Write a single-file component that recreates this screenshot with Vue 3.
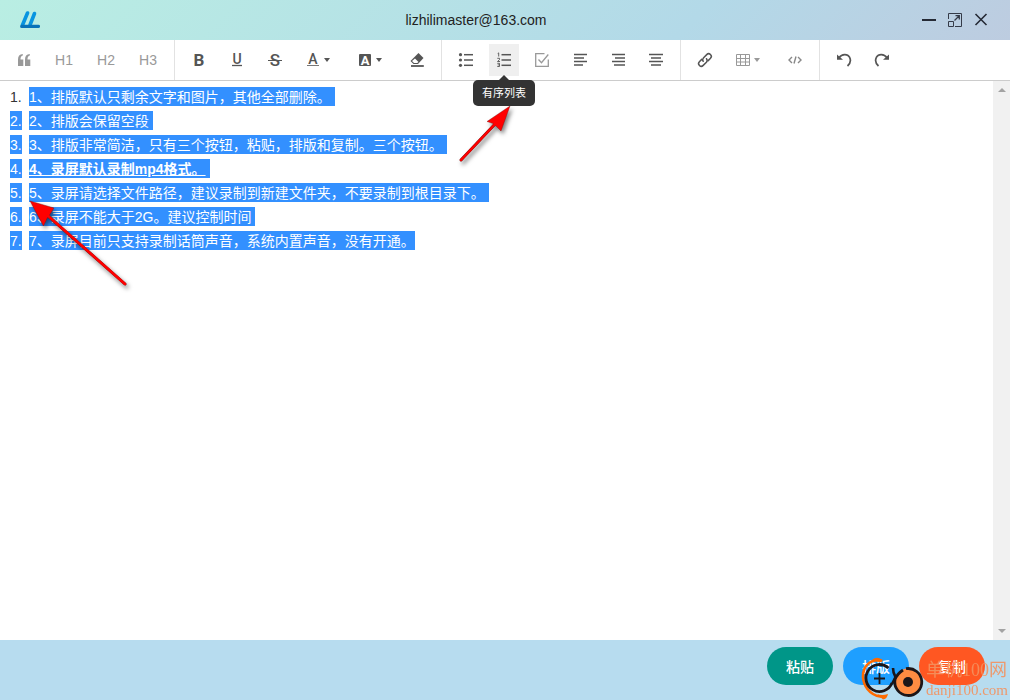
<script setup>
const txt = (x, y, size, weight, ch, fill = '#555') =>
  `<text x="${x}" y="${y}" text-anchor="middle" font-family="Roboto, sans-serif" font-size="${size}" font-weight="${weight}" fill="${fill}">${ch}</text>`

const rows = (list) =>
  list.map(([x1, y, x2]) => `<path d="M${x1} ${y}H${x2}" stroke="#555" stroke-width="1.500"/>`).join('')

const groups = [
  [
    {
      label: '引用',
      icon: '<path fill="#999" d="M7.800 3v1.500C6 5 5.500 6.500 5.500 8.500H8.300V15H3V8.500C3 5 4.500 3.200 7.800 3zM14.800 3v1.500C13 5 12.500 6.500 12.500 8.500H15.300V15H10V8.500C10 5 11.500 3.200 14.800 3z"/>',
    },
    { label: '标题1', text: 'H1' },
    { label: '标题2', text: 'H2' },
    { label: '标题3', text: 'H3' },
  ],
  [
    { label: '加粗', icon: txt(9, 15, 17, 700, 'B') },
    { label: '下划线', icon: txt(9, 12.5, 14, 500, 'U') + '<path d="M4 14.500H14" stroke="#555" stroke-width="1.300"/>' },
    { label: '删除线', icon: txt(9, 15, 17, 500, 'S') + '<path d="M2 9.500H16" stroke="#555"/>' },
    { label: '文字颜色', menu: true, icon: txt(9, 12.5, 14, 500, 'A') + '<path d="M3 14.500H15" stroke="#777"/>' },
    {
      label: '背景颜色',
      menu: true,
      icon: '<rect x="3" y="3" width="12" height="12" rx="1" fill="#555"/>' + txt(9, 13.5, 13, 700, 'A', '#fff'),
    },
    {
      label: '清除格式',
      icon: '<path fill="#555" d="M10.500 2l5 5-5.500 6H5.500L2.500 10z"/><path fill="#fff" d="M7 7.500l3.500 3.500-1.300 1H6L4 10.100z"/><path d="M3 15H15.800" stroke="#555" stroke-width="1.800"/>',
    },
  ],
  [
    {
      label: '无序列表',
      icon: '<g fill="#555"><circle cx="3.500" cy="3.700" r="1.600"/><circle cx="3.500" cy="9" r="1.600"/><circle cx="3.500" cy="14.300" r="1.600"/></g>' + rows([[7, 3.7, 16], [7, 9, 16], [7, 14.3, 16]]),
    },
    {
      label: '有序列表',
      active: true,
      icon: '<path fill="none" stroke="#555" stroke-width=".9" d="M2.700 2.500l1-.6V5.500M2.300 7.300H4.500V8.600L2.500 10.500H5M2.300 12.300H4.500V15.500H2.300M2.700 13.900H4.500"/>' + rows([[6.5, 3.7, 16], [6.5, 9, 16], [6.5, 14.3, 16]]),
    },
    {
      label: '待办事项',
      icon: '<path fill="none" stroke="#999" stroke-width="1.300" d="M11.500 2.700H2.700V15.300H15.300V8.500M5.500 8.500l3 3.200 6.800-8.200"/>',
    },
    { label: '左对齐', icon: rows([[3, 3.5, 16], [3, 7, 13], [3, 10.5, 16], [3, 14, 12]]) },
    { label: '右对齐', icon: rows([[3, 3.5, 16], [6, 7, 16], [3, 10.5, 16], [5, 14, 16]]) },
    { label: '居中对齐', icon: rows([[2, 3.5, 16], [4, 7, 14], [2, 10.5, 16], [4, 14, 14]]) },
  ],
  [
    {
      label: '链接',
      icon: '<g fill="none" stroke="#555" stroke-width="1.500" stroke-linecap="round"><path d="M7.200 10.300a2.700 2.700 0 0 1 .2-3.400l3.300-3.300a2.600 2.600 0 0 1 3.800 3.700L12.200 9.600"/><path d="M10.500 7.700a2.700 2.700 0 0 1-.1 3.500l-3.200 3.200a2.600 2.600 0 0 1-3.800-3.700L5.700 8.400"/></g>',
    },
    {
      label: '表格',
      menu: true,
      pale: true,
      icon: '<path fill="none" stroke="#999" d="M2.500 3.500h13v11h-13zM2.500 7.500h13M2.500 11h13M6.500 3v12M11.500 3v12"/>',
    },
    {
      label: '代码',
      icon: '<path fill="none" stroke="#888" stroke-width="1.400" d="M6 6L3 9l3 3M12 6l3 3-3 3M10 5.500L8 12.500"/>',
    },
  ],
  [
    {
      label: '撤销',
      icon: '<path fill="#555" d="M2 3.500v5.300h6z"/><path fill="none" stroke="#555" stroke-width="1.700" d="M4 6.800C7 2.800 12.500 2.700 14.500 6.200c1.600 3 .8 6.300-2 8.800"/>',
    },
    {
      label: '重做',
      icon: '<path fill="#555" d="M16 3.500v5.300h-6z"/><path fill="none" stroke="#555" stroke-width="1.700" d="M14 6.800C11 2.800 5.500 2.700 3.500 6.200c-1.600 3-.8 6.300 2 8.800"/>',
    },
  ],
]

const lines = [
  { text: '1、排版默认只剩余文字和图片，其他全部删除。' },
  { text: '2、排版会保留空段' },
  { text: '3、排版非常简洁，只有三个按钮，粘贴，排版和复制。三个按钮。' },
  { text: '4、录屏默认录制mp4格式。', strong: true },
  { text: '5、录屏请选择文件路径，建议录制到新建文件夹，不要录制到根目录下。' },
  { text: '6、录屏不能大于2G。建议控制时间' },
  { text: '7、录屏目前只支持录制话筒声音，系统内置声音，没有开通。' },
]

const actions = [
  { name: '粘贴', tone: 'teal' },
  { name: '排版', tone: 'blue' },
  { name: '复制', tone: 'orange' },
]
</script>

<template>
  <div class="app">
    <header class="titlebar">
      <svg class="logo" viewBox="0 0 20 18" width="20" height="18" aria-hidden="true">
        <g stroke="#0894e0" stroke-width="3.600" stroke-linecap="round">
          <path d="M7.500 2L2.500 14" />
          <path d="M14.500 2.500L10 14" />
        </g>
        <path d="M1.700 15.400H18.500" stroke="#0872b8" stroke-width="3.200" stroke-linecap="round" />
      </svg>
      <h1 class="title">lizhilimaster@163.com</h1>
      <div class="window-buttons">
        <button type="button" aria-label="最小化">
          <svg viewBox="0 0 16 16" width="16" height="16"><path d="M1 8H15" stroke="#252a35" stroke-width="2" /></svg>
        </button>
        <button type="button" aria-label="最大化">
          <svg viewBox="0 0 16 16" width="16" height="16" fill="none" stroke="#353b48">
            <path d="M1.500 7V1.500h13v13H8M1.500 9.500h5v5h-5z" />
            <path d="M7.500 8.500L12 4M8.500 3.700H12.300V7.500" stroke-width="1.300" />
          </svg>
        </button>
        <button type="button" aria-label="关闭">
          <svg viewBox="0 0 16 16" width="16" height="16"><path d="M2.500 2L13.500 13M13.500 2L2.500 13" stroke="#252a35" stroke-width="1.600" /></svg>
        </button>
      </div>
    </header>

    <div class="toolbar" role="toolbar" aria-label="编辑工具">
      <div v-for="(group, g) in groups" :key="g" class="group">
        <button
          v-for="tool in group"
          :key="tool.label"
          type="button"
          class="tool"
          :class="{ heading: tool.text, menu: tool.menu, active: tool.active }"
          :aria-label="tool.label"
        >
          <template v-if="tool.text">{{ tool.text }}</template>
          <svg v-else viewBox="0 0 18 18" width="18" height="18" aria-hidden="true" v-html="tool.icon"></svg>
          <svg v-if="tool.menu" class="caret" viewBox="0 0 6 4" width="6" height="4" aria-hidden="true">
            <path d="M0 0H6L3 4z" :fill="tool.pale ? '#999' : '#555'" />
          </svg>
          <span v-if="tool.active" class="tooltip" role="tooltip">{{ tool.label }}</span>
        </button>
      </div>
    </div>

    <main class="editor">
      <ol class="content">
        <li v-for="(line, i) in lines" :key="i">
          <span class="marker" :class="{ selected: i > 0 }">{{ i + 1 }}.</span>
          <span class="selected line" :class="{ strong: line.strong }">{{ line.text }}</span>
        </li>
      </ol>
      <div class="scrollbar" aria-hidden="true">
        <svg viewBox="0 0 8 4" width="8" height="4"><path d="M4 0L8 4H0z" fill="#a3a3a3" /></svg>
        <svg viewBox="0 0 8 4" width="8" height="4"><path d="M0 0H8L4 4z" fill="#a3a3a3" /></svg>
      </div>
    </main>

    <footer class="footer">
      <button v-for="a in actions" :key="a.name" type="button" class="action" :class="a.tone">{{ a.name }}</button>
      <div class="watermark">
        <svg viewBox="0 0 66 44" width="66" height="44" fill="none" aria-hidden="true">
          <path d="M22 4.500C15 3 7 6 4 14c-3 9 1 19 9 24 3 2 6 3 10 2.500" stroke="#ff6a00" stroke-width="2.600" />
          <path d="M12 4q6-5 11 1l-2 1q-4 0-9-2zM17 38q5 2 11 0q-1 5-5 5.500z" fill="#ff6a00" />
          <path d="M28.500 12A13.500 13.500 0 1 0 32 27" stroke="#1c1619" stroke-width="2.800" />
          <path d="M14 22.500h11M19.500 17v11" stroke="#1c1619" stroke-width="1.800" />
          <path d="M44 13A13.500 13.500 0 1 1 37 18.500Z" fill="#ff8c42" />
          <path d="M46 12.700A13.500 13.500 0 1 1 35 23.500Q37 18 43 14" stroke="#1c1619" stroke-width="2.800" />
          <path d="M33 12q0 5 2.500 9q-2 4-3.500 7" stroke="#1c1619" stroke-width="2.600" />
          <circle cx="48" cy="26" r="5" fill="#1c1619" />
        </svg>
        <div class="watermark-text">
          <span class="site">单机100网</span>
          <span class="domain">danji100.com</span>
        </div>
      </div>
    </footer>

    <svg class="annotations" width="560" height="300" viewBox="0 0 560 300" aria-hidden="true">
      <g stroke="#7c1010" stroke-width="3" stroke-linecap="round">
        <path d="M461 160L496 123" />
        <path d="M125 284L48 216" />
      </g>
      <g fill="#ff0000" stroke="#7c1010" stroke-width=".4">
        <path d="M510 106L501 131 496.500 126.500 493 123.500 487 121.500z" />
        <path d="M30 201L54 208 50.500 213.500 47 218.500 43.500 226z" />
      </g>
      <g stroke="#ff0000" stroke-width="2.400" stroke-linecap="round">
        <path d="M461 160L498 121" />
        <path d="M125 284L46 214" />
      </g>
    </svg>
  </div>
</template>

<style>
body {
  margin: 0;
}
</style>

<style scoped>
.app {
  position: relative;
  display: flex;
  flex-direction: column;
  min-height: 100vh;
  background: #fff;
  color: #333;
  font-family: "Liberation Sans", "Noto Sans CJK SC", sans-serif;
  font-size: 14px;
}

button {
  margin: 0;
  padding: 0;
  border: 0;
  background: none;
  color: inherit;
  font: inherit;
  cursor: pointer;
}

svg {
  display: block;
  flex: none;
}

.titlebar {
  display: flex;
  align-items: center;
  height: 40px;
  padding: 0 16px 0 20px;
  background: linear-gradient(135deg, #b9eee3, #b3d9e8 68%, #bdcce0);
}

.title {
  flex: 1;
  margin: 0;
  color: #222;
  font-size: 14px;
  font-weight: 400;
  text-align: center;
}

.window-buttons {
  display: flex;
  margin-left: 4px;
}

.window-buttons button {
  display: flex;
  align-items: center;
  justify-content: center;
  width: 26px;
  height: 38px;
}

.toolbar {
  display: flex;
  height: 40px;
  border-bottom: 1px solid #ccc;
}

.group {
  display: flex;
  align-items: center;
  gap: 8px;
  padding: 0 9px;
  border-right: 1px solid #e2e2e2;
}

.group:last-child {
  border-right: 0;
}

.tool {
  position: relative;
  display: flex;
  align-items: center;
  justify-content: center;
  width: 30px;
  height: 32px;
}

.tool.heading {
  width: 34px;
  color: #999;
}

.tool.menu {
  justify-content: flex-start;
  gap: 2px;
  width: 44px;
  padding-left: 6px;
}

.tool.active {
  background: #efefef;
}

.tooltip {
  position: absolute;
  top: 36px;
  left: 50%;
  z-index: 2;
  padding: 0 9px;
  border-radius: 5px;
  background: #333;
  color: #fff;
  font-size: 11px;
  line-height: 26px;
  white-space: nowrap;
  transform: translateX(-50%);
}

.tooltip::before {
  position: absolute;
  bottom: 100%;
  left: 50%;
  border: 5px solid transparent;
  border-top: 0;
  border-bottom-color: #333;
  content: "";
  transform: translateX(-50%);
}

.editor {
  display: flex;
  flex: 1;
}

.content {
  display: flex;
  flex: 1;
  flex-direction: column;
  gap: 5px;
  margin: 0;
  padding: 6px 10px;
  line-height: 17px;
  list-style: none;
}

.content li {
  display: flex;
  gap: 7px;
}

.content span {
  padding-top: 2px;
}

.marker {
  min-width: 12px;
}

.selected {
  background: #3390ff;
  color: #fff;
}

.line {
  padding-right: 4px;
}

.content li:last-child .line {
  padding-right: 0;
}

.strong {
  font-weight: 700;
  text-decoration: underline;
}

.scrollbar {
  display: flex;
  flex-direction: column;
  align-items: center;
  justify-content: space-between;
  width: 17px;
  padding: 7px 0;
  box-sizing: border-box;
  background: #f1f1f1;
}

.footer {
  position: relative;
  display: flex;
  justify-content: flex-end;
  gap: 10px;
  height: 60px;
  padding: 7px 25px;
  box-sizing: border-box;
  background: #b7dcef;
}

.action {
  width: 66px;
  height: 38px;
  border-radius: 19px;
  color: #fff;
  font-weight: 500;
}

.teal {
  background: #009688;
}

.blue {
  background: #1e9fff;
}

.orange {
  background: #ff5722;
}

.watermark {
  position: absolute;
  right: 2px;
  bottom: 0;
  display: flex;
  align-items: flex-end;
  pointer-events: none;
}

.watermark-text {
  display: flex;
  flex-direction: column;
  color: #f3925f;
  font-family: "Liberation Serif", "Noto Sans CJK SC", serif;
  opacity: 0.9;
}

.site {
  font-size: 18px;
  line-height: 20px;
}

.domain {
  font-size: 15px;
  line-height: 20px;
}

.annotations {
  position: absolute;
  top: 0;
  left: 0;
  z-index: 3;
  filter: drop-shadow(2px 3px 2px rgba(0, 0, 0, 0.5));
  pointer-events: none;
}
</style>
